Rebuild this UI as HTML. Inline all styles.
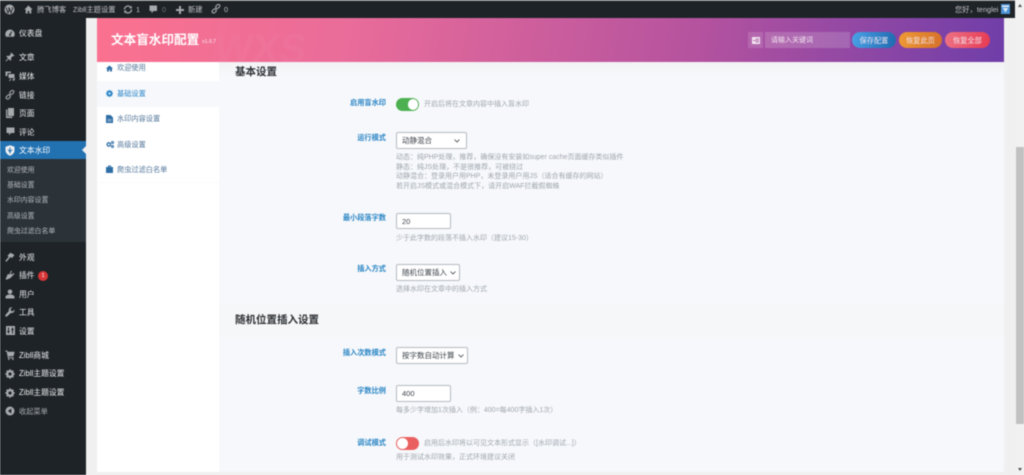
<!DOCTYPE html>
<html lang="zh"><head><meta charset="utf-8"><title>文本盲水印配置</title>
<style>
html,body{margin:0;padding:0;width:1024px;height:475px;overflow:hidden;background:#f0f0f1}
body{font-family:"Liberation Sans","Noto Sans CJK SC",sans-serif;position:relative}
#w{position:absolute;left:0;top:0;width:1024px;height:475px;overflow:hidden;filter:blur(.42px)}
.a{position:absolute}
.t{position:absolute;white-space:nowrap;line-height:12px;height:12px;margin-top:1px}
.bar{color:#c3c4c7;font-size:7.3px}
.m{color:#f0f0f1;font-size:7.8px;left:19px}
.s{color:#b4b9be;font-size:6.9px;left:7px}
.n{color:#53769a;font-size:7.2px;left:117px}
.l{color:#2a85c5;font-size:7.2px;font-weight:700;right:638px}
.d{color:#a0a6ae;font-size:7px;left:396px}
.h{color:#2b2f33;font-size:10.5px;font-weight:700;left:235px}
.f{position:absolute;left:396px;background:#fff;border:1px solid #b5bac0;border-radius:2px;box-sizing:border-box;color:#3c434a;font-size:7.5px;padding-left:5px}
.f svg{position:absolute;top:5.5px}
.b{position:absolute;top:32px;height:16px;border-radius:8px;color:#f3e6ee;font-size:7.2px;line-height:17px;text-align:center}
svg{position:absolute;display:block}
</style></head><body><div id="w">

<!-- content panels -->
<div class="a" style="left:97px;top:62px;width:122px;height:410px;background:#fff"></div>
<div class="a" style="left:219px;top:62px;width:785px;height:410px;background:#f6f8fb"></div>
<div class="a" style="left:219px;top:62px;width:785px;height:14px;background:linear-gradient(#f3f3f5,#f6f8fb)"></div>
<div class="a" style="left:219px;top:304px;width:785px;height:33px;background:#f6f7f8"></div>
<div class="a" style="left:97px;top:81px;width:122px;height:26px;background:#f6f8fb"></div>
<div class="a" style="left:97px;top:182px;width:122px;height:1px;background:#fafafb"></div>

<!-- sidebar -->
<div class="a" style="left:0;top:0;width:86px;height:475px;background:#1d2327"></div>
<div class="a" style="left:0;top:159px;width:86px;height:83px;background:#2c3338"></div>
<div class="a" style="left:0;top:141px;width:86px;height:18px;background:#2271b1"></div>
<div class="a" style="left:82px;top:146px;width:0;height:0;border:4px solid transparent;border-right-color:#f0f0f1;border-left:0"></div>

<!-- header -->
<div class="a" style="left:97px;top:18px;width:907px;height:44px;background:linear-gradient(100deg,#fb7290 0%,#e96c9a 28%,#b5539f 66%,#6f3ea9 100%);overflow:hidden">
  <div class="t" style="left:118px;top:10px;height:40px;line-height:40px;font-size:40px;font-weight:700;color:rgba(255,255,255,.03);transform:skewX(-8deg)">WXS</div>
</div>
<div class="t" style="left:111px;top:31px;height:16px;line-height:16px;color:#fff;font-size:12.6px;font-weight:700">文本盲水印配置</div>
<div class="t" style="left:202px;top:36px;color:#f6c8d6;font-size:5px;font-weight:700;line-height:11px">v1.0.7</div>
<div class="a" style="left:748px;top:32px;width:15px;height:16px;background:rgba(255,255,255,.14)"></div>
<svg style="left:751.5px;top:36.5px" width="8" height="7" viewBox="0 0 8 7"><path d="M0 0h8v7H0z" fill="#f2e6f2"/><path d="M3.500 2h3.500M3.500 5h3.500M1 3.500h6" stroke="#a9539f" stroke-width=".8"/></svg>
<div class="a" style="left:765px;top:32px;width:85px;height:16px;background:rgba(255,255,255,.17)"></div>
<div class="t" style="left:771px;top:33.500px;color:#f3e4f0;font-size:7px">请输入关键词</div>
<div class="b" style="left:852px;width:44px;background:linear-gradient(100deg,#4ba2e6,#1f69b0)">保存配置</div>
<div class="b" style="left:899px;width:43px;background:linear-gradient(100deg,#ee9a35,#d5702a)">恢复此页</div>
<div class="b" style="left:945px;width:45px;background:linear-gradient(100deg,#ee7284,#e63a52)">恢复全部</div>

<!-- admin bar -->
<div class="a" style="left:0;top:0;width:1015px;height:18px;background:#1d2327"></div>
<div class="a" style="left:0;top:0;width:1015px;height:1px;background:#8d8f8e"></div>
<svg style="left:4px;top:4px" width="11" height="11" viewBox="0 0 11 11"><circle cx="5.500" cy="5.500" r="5" fill="#a7aaad"/><path d="M2 3.500l2 5.500 1.300-3.700L4.500 3.500M5 3.500l2 5.500 1.500-4.200c.2-.8-.2-1.300-.6-1.300" stroke="#1d2327" stroke-width=".9" fill="none"/></svg>
<svg style="left:24px;top:5px" width="9" height="9" viewBox="0 0 9 9"><path d="M4.500.5L.5 4.500h1.200V8.500h2V6h1.600v2.500h2V4.500h1.200z" fill="#a7aaad"/></svg>
<div class="t bar" style="left:37px;top:3px">腾飞博客</div>
<div class="t bar" style="left:73px;top:3px">Zibll主题设置</div>
<svg style="left:123px;top:5px" width="10" height="9" viewBox="0 0 10 9"><path d="M1.500 4.500a3.500 3.500 0 0 1 6-2.400M8.500 4.500a3.500 3.500 0 0 1-6 2.400" stroke="#a7aaad" stroke-width="1.300" fill="none"/><path d="M8.800 .8v2.700H6.100zM1.200 8.200V5.500h2.700z" fill="#a7aaad"/></svg>
<div class="t bar" style="left:136px;top:3px">1</div>
<svg style="left:149px;top:5px" width="9" height="9" viewBox="0 0 9 9"><path d="M.5.500h7.500v5.500H4.500L2.500 8.300V6H.5z" fill="#a7aaad"/></svg>
<div class="t bar" style="left:162px;top:3px;color:#72777c">0</div>
<svg style="left:176px;top:5.500px" width="8" height="8" viewBox="0 0 8 8"><path d="M3 0h2v3h3v2H5v3H3V5H0V3h3z" fill="#a7aaad"/></svg>
<div class="t bar" style="left:188px;top:3px">新建</div>
<svg style="left:211px;top:4px" width="10" height="10" viewBox="0 0 10 10"><g fill="none" stroke="#a7aaad" stroke-width="1.100"><rect x="4.500" y=".9" width="4.600" height="3" rx="1.500" transform="rotate(-45 6.800 2.400)"/><rect x=".9" y="5.500" width="4.600" height="3" rx="1.500" transform="rotate(-45 3.200 7)"/></g></svg>
<div class="t bar" style="left:224px;top:3px">0</div>
<div class="t bar" style="left:955px;top:3px">您好，tenglei</div>
<svg style="left:1001px;top:4px" width="9" height="10" viewBox="0 0 9 10"><rect width="9" height="10" fill="#4d94d6"/><rect x="1" y="1.500" width="7" height="1.500" fill="#e9f2fa"/><path d="M1.800 4h5.400L4.500 8.500z" fill="#dcebf8"/></svg>

<!-- sidebar icons -->
<svg style="left:5px;top:29px" width="10" height="9" viewBox="0 0 10 9"><path d="M5 .5a4.700 4.700 0 0 0-4.700 4.700c0 1 .3 1.900.8 2.600h7.800c.5-.7.800-1.600.8-2.600A4.700 4.700 0 0 0 5 .5z" fill="#a7aaad"/><path d="M5 5.500L6.800 2.500" stroke="#1d2327"/><circle cx="5" cy="6" r="1" fill="#1d2327"/></svg>
<svg style="left:5px;top:52px" width="10" height="10" viewBox="0 0 10 10"><path d="M6.300.5l3.200 3.200-1 .6-.7-.3L6 6 6.200 8l-.7.700L3.800 7 1 9.500.5 9 3 6.200 1.300 4.500 2 3.800l2 .2L5.900 2.200 5.600 1.500z" fill="#a7aaad"/></svg>
<svg style="left:5px;top:71px" width="10" height="10" viewBox="0 0 10 10"><path d="M.5.500h5.500v1.500H2.500v3H.5zM3.500 3h6v4h-6z" fill="#a7aaad"/><path d="M9.500 7.500v1.200c0 .4-1 .9-1.500.5s0-1 .5-1zM5.500 7.500v1.400c0 .4-.9.900-1.400.5" stroke="#a7aaad" fill="none" stroke-width=".8"/></svg>
<svg style="left:5px;top:90px" width="10" height="10" viewBox="0 0 10 10"><g fill="none" stroke="#a7aaad" stroke-width="1.100"><rect x="4.500" y=".9" width="4.600" height="3" rx="1.500" transform="rotate(-45 6.800 2.400)"/><rect x=".9" y="5.500" width="4.600" height="3" rx="1.500" transform="rotate(-45 3.200 7)"/></g></svg>
<svg style="left:6px;top:108px" width="8" height="10" viewBox="0 0 8 10"><path d="M2 0h6v8H2z" fill="#a7aaad"/><path d="M0 1.500h1.300v7h5v1.500H0z" fill="#a7aaad"/></svg>
<svg style="left:6px;top:127px" width="9" height="9" viewBox="0 0 9 9"><path d="M.5.500h8v5.500H5L3 8.300V6H.5z" fill="#a7aaad"/></svg>
<svg style="left:5px;top:145px" width="10" height="11" viewBox="0 0 10 11"><path d="M5 .3l4.500 1.500v3.400c0 2.600-2 4.600-4.500 5.500C2.500 9.800.5 7.800.5 5.200V1.800z" fill="#f0f0f1"/><path d="M5 2.500v6M3 4.500l2 2.500 2-2.500" stroke="#2271b1" fill="none"/></svg>
<svg style="left:5px;top:252px" width="10" height="10" viewBox="0 0 10 10"><path d="M.3 9l3.400-4.200L2.500 3.600 5.500.7 9.500 3 7 6 5.400 5 1.500 9.700z" fill="#a7aaad"/></svg>
<svg style="left:5px;top:270px" width="10" height="10" viewBox="0 0 10 10"><path d="M6 .5l1 1-1.500 2 1.200 1 1.800-1.500.9.900L5.500 8 2 9.500.5 9.500 1.500 7 3 3.700l1.300 1z" fill="#a7aaad"/></svg>
<svg style="left:5px;top:289px" width="10" height="10" viewBox="0 0 10 10"><circle cx="5" cy="2.800" r="2.300" fill="#a7aaad"/><path d="M.5 9.500V8c0-1.500 2-2.500 4.500-2.500S9.500 6.500 9.500 8v1.500z" fill="#a7aaad"/></svg>
<svg style="left:5px;top:307px" width="10" height="10" viewBox="0 0 10 10"><path d="M9.500 2.500L7.800 4.200 5.900 3.900 5.600 2 7.300.4C5.700-.1 4 .9 3.800 2.700c-.1.500 0 1 .1 1.300L.5 7.900c-.5.500-.3 1.200.1 1.500.4.400 1 .5 1.500 0l3.800-3.500c1.900.6 3.900-1 3.600-3.400z" fill="#a7aaad"/></svg>
<svg style="left:6px;top:326px" width="9" height="9" viewBox="0 0 9 9"><rect width="9" height="9" fill="#a7aaad"/><path d="M2.500 1.500v6M6.500 1.500v6M1.200 5.500h2.600M5.200 3.500h2.600" stroke="#1d2327"/></svg>
<svg style="left:5px;top:350px" width="10" height="10" viewBox="0 0 10 10"><path d="M.3.500h2l.5 1.300h6.900L8.500 6.200H3.600l.3 1h4.800v1H3L1.600 1.500H.3z" fill="#a7aaad"/><circle cx="3.800" cy="9.200" r=".8" fill="#a7aaad"/><circle cx="7.800" cy="9.200" r=".8" fill="#a7aaad"/></svg>
<svg style="left:5px;top:369px" width="10" height="10" viewBox="0 0 10 10"><circle cx="5" cy="5" r="2.900" fill="none" stroke="#a7aaad" stroke-width="2"/><path d="M5 .3v9.400M.3 5h9.400M1.700 1.700l6.600 6.600M8.300 1.700L1.700 8.300" stroke="#a7aaad" stroke-width="1.500"/><circle cx="5" cy="5" r="1.600" fill="#1d2327"/></svg>
<svg style="left:5px;top:388px" width="10" height="10" viewBox="0 0 10 10"><circle cx="5" cy="5" r="2.900" fill="none" stroke="#a7aaad" stroke-width="2"/><path d="M5 .3v9.400M.3 5h9.400M1.700 1.700l6.600 6.600M8.300 1.700L1.700 8.300" stroke="#a7aaad" stroke-width="1.500"/><circle cx="5" cy="5" r="1.600" fill="#1d2327"/></svg>
<svg style="left:5px;top:406px" width="10" height="10" viewBox="0 0 10 10"><circle cx="5" cy="5" r="4.500" fill="#a7aaad"/><path d="M6.300 2.500v5L2.900 5z" fill="#1d2327"/></svg>

<!-- sidebar text -->
<div class="t m" style="top:27px">仪表盘</div>
<div class="t m" style="top:51px">文章</div>
<div class="t m" style="top:70px">媒体</div>
<div class="t m" style="top:89px">链接</div>
<div class="t m" style="top:107px">页面</div>
<div class="t m" style="top:126px">评论</div>
<div class="t m" style="top:144px;color:#fff">文本水印</div>
<div class="t s" style="top:164px">欢迎使用</div>
<div class="t s" style="top:179px">基础设置</div>
<div class="t s" style="top:194px">水印内容设置</div>
<div class="t s" style="top:210px">高级设置</div>
<div class="t s" style="top:225px">爬虫过滤白名单</div>
<div class="t m" style="top:251px">外观</div>
<div class="t m" style="top:269px">插件</div>
<div class="a" style="left:38px;top:271px;width:10px;height:10px;border-radius:5px;background:#d63638;color:#fff;font-size:5.500px;line-height:10px;text-align:center">1</div>
<div class="t m" style="top:288px">用户</div>
<div class="t m" style="top:306px">工具</div>
<div class="t m" style="top:325px">设置</div>
<div class="t m" style="top:349px">Zibll商城</div>
<div class="t m" style="top:367px">Zibll主题设置</div>
<div class="t m" style="top:386px">Zibll主题设置</div>
<div class="t m" style="top:405px;color:#a7aaad;font-size:7.2px">收起菜单</div>

<!-- nav -->
<svg style="left:106px;top:64.500px" width="7" height="7" viewBox="0 0 7 7"><path d="M3.500.5L0 3.500h1V6.500h2V4.500h1v2h2v-3h1z" fill="#2f6ea5"/></svg>
<svg style="left:106px;top:90px" width="7" height="7" viewBox="0 0 7 7"><circle cx="3.500" cy="3.500" r="2.200" fill="none" stroke="#2b86c8" stroke-width="1.600"/><path d="M3.500 0v7M0 3.500h7M1 1l5 5M6 1L1 6" stroke="#2b86c8"/><circle cx="3.500" cy="3.500" r="1" fill="#f6f8fb"/></svg>
<svg style="left:106px;top:115px" width="7" height="8" viewBox="0 0 7 8"><path d="M0 0h4.500L7 2.500V8H0z" fill="#2f6ea5"/><path d="M1.500 4.500h4M1.500 6h4" stroke="#fff" stroke-width=".6"/></svg>
<svg style="left:105.500px;top:141px" width="8" height="7" viewBox="0 0 8 7"><circle cx="2.800" cy="3.500" r="1.700" fill="none" stroke="#2f6ea5" stroke-width="1.300"/><circle cx="6.500" cy="1.500" r="1" fill="none" stroke="#2f6ea5"/><circle cx="6.500" cy="5.500" r="1" fill="none" stroke="#2f6ea5"/></svg>
<svg style="left:106px;top:165px" width="7" height="8" viewBox="0 0 7 8"><path d="M0 2h7v6H0z" fill="#2f6ea5"/><path d="M2.500 2V1h2v1" stroke="#2f6ea5" fill="none"/></svg>
<div class="t n" style="top:61px">欢迎使用</div>
<div class="t n" style="top:87px;color:#2b86c8">基础设置</div>
<div class="t n" style="top:112px">水印内容设置</div>
<div class="t n" style="top:138px">高级设置</div>
<div class="t n" style="top:163px">爬虫过滤白名单</div>

<!-- section 1 -->
<div class="t h" style="top:65px;height:13px;line-height:13px">基本设置</div>
<div class="t l" style="top:96px">启用盲水印</div>
<div class="a" style="left:396px;top:98px;width:23px;height:13px;border-radius:7px;background:#4caf50"></div>
<div class="a" style="left:407.500px;top:99px;width:10.500px;height:11px;border-radius:6px;background:#fff"></div>
<div class="t d" style="left:424px;top:98px">开启后将在文章内容中插入盲水印</div>

<div class="t l" style="top:131px">运行模式</div>
<div class="f" style="top:132px;width:71px;height:17px;line-height:16px">动静混合<svg style="right:6px" width="6" height="4" viewBox="0 0 6 4"><path d="M.5.500L3 3 5.500.500" stroke="#3c434a" fill="none" stroke-width=".8"/></svg></div>
<div class="t d" style="top:151px">动态：纯PHP处理，推荐，确保没有安装如super cache页面缓存类似插件</div>
<div class="t d" style="top:160.500px">静态：纯JS处理，不是很推荐，可被绕过</div>
<div class="t d" style="top:170px">动静混合：登录用户用PHP，未登录用户用JS（适合有缓存的网站）</div>
<div class="t d" style="top:180px">若开启JS模式或混合模式下，请开启WAF拦截假蜘蛛</div>

<div class="t l" style="top:211px">最小段落字数</div>
<div class="f" style="top:213px;width:55px;height:16px;line-height:15px">20</div>
<div class="t d" style="top:232px">少于此字数的段落不插入水印（建议15-30）</div>

<div class="t l" style="top:262px">插入方式</div>
<div class="f" style="top:264px;width:64px;height:17px;line-height:16px">随机位置插入<svg style="right:3px" width="6" height="4" viewBox="0 0 6 4"><path d="M.5.500L3 3 5.500.500" stroke="#3c434a" fill="none" stroke-width=".8"/></svg></div>
<div class="t d" style="top:283px">选择水印在文章中的插入方式</div>

<!-- section 2 -->
<div class="t h" style="top:313px;height:13px;line-height:13px">随机位置插入设置</div>
<div class="t l" style="top:346px">插入次数模式</div>
<div class="f" style="top:347px;width:72px;height:17px;line-height:16px">按字数自动计算<svg style="right:3px" width="6" height="4" viewBox="0 0 6 4"><path d="M.5.500L3 3 5.500.500" stroke="#3c434a" fill="none" stroke-width=".8"/></svg></div>
<div class="t l" style="top:384px">字数比例</div>
<div class="f" style="top:385px;width:55px;height:17px;line-height:16px">400</div>
<div class="t d" style="top:404px">每多少字增加1次插入（例：400=每400字插入1次）</div>
<div class="t l" style="top:436px">调试模式</div>
<div class="a" style="left:396px;top:437px;width:23px;height:13px;border-radius:7px;background:#ea5f5f"></div>
<div class="a" style="left:397px;top:438px;width:10.500px;height:11px;border-radius:6px;background:#fff"></div>
<div class="t d" style="left:424px;top:437px">启用后水印将以可见文本形式显示（[水印调试...]）</div>
<div class="t d" style="top:451px">用于测试水印效果，正式环境建议关闭</div>

<!-- scrollbar -->
<div class="a" style="left:1004px;top:18px;width:11px;height:457px;background:#f0f0f1"></div>
<div class="a" style="left:1015px;top:0;width:9px;height:475px;background:#f1f1f1"></div>
<div class="a" style="left:1016px;top:147px;width:8px;height:277px;background:#c1c1c1"></div>
<div class="a" style="left:1018px;top:4px;width:0;height:0;border-left:2.500px solid transparent;border-right:2.500px solid transparent;border-bottom:3px solid #505050"></div>
<div class="a" style="left:1018px;top:468px;width:0;height:0;border-left:2.500px solid transparent;border-right:2.500px solid transparent;border-top:3px solid #505050"></div>
</div></body></html>
